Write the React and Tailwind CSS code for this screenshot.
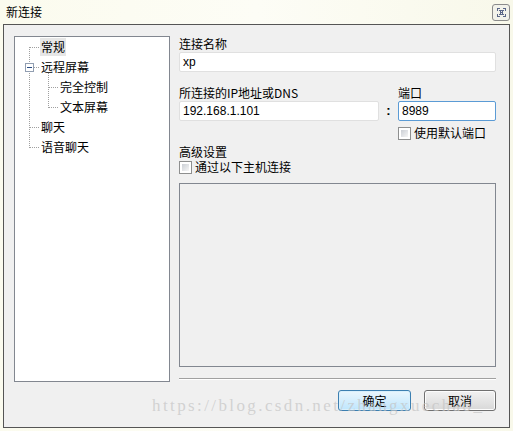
import React from 'react'

const ui = { fontFamily: '"Noto Sans CJK SC", "Liberation Sans", sans-serif' }
const latin = { fontFamily: '"Liberation Sans", "Noto Sans CJK SC", sans-serif' }

function Checkbox({ label }) {
  return (
    <div className="flex items-center h-[14px]">
      <span className="w-[13px] h-[13px] border border-[#8e8f8f] bg-white p-[2px] shrink-0">
        <span className="block w-full h-full bg-gradient-to-br from-[#cbcfd5] to-[#f6f6f6]" />
      </span>
      <span className="ml-[3px] text-[12px] text-black leading-none">{label}</span>
    </div>
  )
}

function TreeLines() {
  return (
    <svg className="absolute left-0 top-0" width="154" height="200" shapeRendering="crispEdges">
      <g stroke="#a0a0a0" strokeDasharray="1 1" fill="none">
        <line x1="14.5" y1="10" x2="14.5" y2="111" />
        <line x1="15" y1="10.5" x2="24" y2="10.5" />
        <line x1="19" y1="30.5" x2="24" y2="30.5" />
        <line x1="15" y1="90.5" x2="24" y2="90.5" />
        <line x1="15" y1="110.5" x2="24" y2="110.5" />
        <line x1="33.5" y1="36" x2="33.5" y2="71" />
        <line x1="34" y1="50.5" x2="43" y2="50.5" />
        <line x1="34" y1="70.5" x2="43" y2="70.5" />
      </g>
      <rect x="10.5" y="26.5" width="8" height="8" fill="#fff" stroke="#919eb1" />
      <line x1="12" y1="30.5" x2="17" y2="30.5" stroke="#2a4d84" />
    </svg>
  )
}

export default function App() {
  const rows = [
    { t: '常规', l: 0, sel: true },
    { t: '远程屏幕', l: 0 },
    { t: '完全控制', l: 1 },
    { t: '文本屏幕', l: 1 },
    { t: '聊天', l: 0 },
    { t: '语音聊天', l: 0 },
  ]
  return (
    <div className="w-[513px] h-[431px] bg-gradient-to-r from-[#fbfbee] via-[#fdfdf6] to-[#f8f8ea] flex flex-col text-black" style={ui}>
      <div className="h-[24px] flex items-center justify-between pl-[6px] pr-[3px] shrink-0">
        <span className="text-[12px] leading-none">新连接</span>
        <span className="w-[18px] h-[17px] border border-[#8b8b8b] rounded-[3px] bg-[#f2f2ea] flex items-center justify-center">
          <svg width="9" height="9" viewBox="0 0 9 9" shapeRendering="crispEdges">
            <path d="M0 0h3v1H0zM6 0h3v1H6zM0 8h3v1H0zM6 8h3v1H6zM0 0h1v3H0zM8 0h1v3H8zM0 6h1v3H0zM8 6h1v3H8zM2 2h5v1H2zM2 6h5v1H2zM3 3h1v3H3zM5 3h1v3H5zM4 4h1v1H4z" fill="#5a6687" />
          </svg>
        </span>
      </div>

      <div className="mx-[3px] mb-[3px] border border-[#555] bg-[#f0f0f0] flex-1 relative flex pl-[10px] pt-[11px]">
        <div className="w-[156px] h-[346px] border border-[#828790] bg-white relative shrink-0">
          <TreeLines />
          <div className="relative">
            {rows.map((r, i) => (
              <div key={i} className="h-[20px] flex items-center" style={{ paddingLeft: r.l ? 44 : 25 }}>
                <span className={'text-[12px] leading-none px-[1px] py-[3px] ' + (r.sel ? 'bg-[#e6e6e6]' : '')}>{r.t}</span>
              </div>
            ))}
          </div>
        </div>

        <div className="ml-[9px] w-[317px] flex flex-col">
          <div className="h-[16px] flex items-center text-[12px] leading-none">连接名称</div>
          <div className="h-[20px] border border-[#e0e0e0] rounded-[2px] bg-white flex items-center px-[3px] text-[12px]" style={latin}>xp</div>

          <div className="flex mt-[12px]">
            <div className="w-[200px] flex flex-col">
              <div className="h-[17px] flex items-center text-[12px] leading-none">所连接的IP地址或DNS</div>
              <div className="h-[20px] border border-[#e0e0e0] rounded-[2px] bg-white flex items-center px-[3px] text-[12px]" style={latin}>192.168.1.101</div>
            </div>
            <div className="w-[19px] flex items-end justify-center h-[37px]">
              <span className="h-[20px] flex items-center text-[13px] font-bold" style={latin}>:</span>
            </div>
            <div className="w-[98px] flex flex-col">
              <div className="h-[17px] flex items-center text-[12px] leading-none">端口</div>
              <div className="h-[20px] border border-[#5b9bd5] rounded-[2px] bg-white flex items-center px-[3px] text-[12px]" style={latin}>8989</div>
              <div className="mt-[5px]">
                <Checkbox label="使用默认端口" />
              </div>
            </div>
          </div>

          <div className="h-[16px] mt-[4px] flex items-center text-[12px] leading-none">高级设置</div>
          <Checkbox label="通过以下主机连接" />
          <div className="mt-[9px] h-[184px] border border-[#828790] bg-[#f0f0f0]" />

          <div className="mt-[11px] h-[2px] border-t border-[#a0a0a0] border-b border-b-white" />

          <div className="mt-[10px] flex justify-end gap-[13px]">
            <button className="w-[73px] h-[21px] rounded-[3px] border border-[#3c7fb1] bg-gradient-to-b from-[#eaf6fd] to-[#bee6fd] text-[12px] leading-none shadow-[inset_0_0_0_1px_#d9f0fc]">确定</button>
            <button className="w-[72px] h-[21px] rounded-[3px] border border-[#707070] bg-gradient-to-b from-[#f2f2f2] to-[#d8d8d8] text-[12px] leading-none shadow-[inset_0_0_0_1px_#fcfcfc]">取消</button>
          </div>
        </div>

        <div className="absolute left-[148px] top-[372px] text-[17px] leading-none text-[#c4c4c4]/70 tracking-[2.4px] pointer-events-none whitespace-nowrap" style={{ fontFamily: '"Liberation Serif", serif' }}>
          https://blog.csdn.net/zhangxuechao_
        </div>
      </div>
    </div>
  )
}
